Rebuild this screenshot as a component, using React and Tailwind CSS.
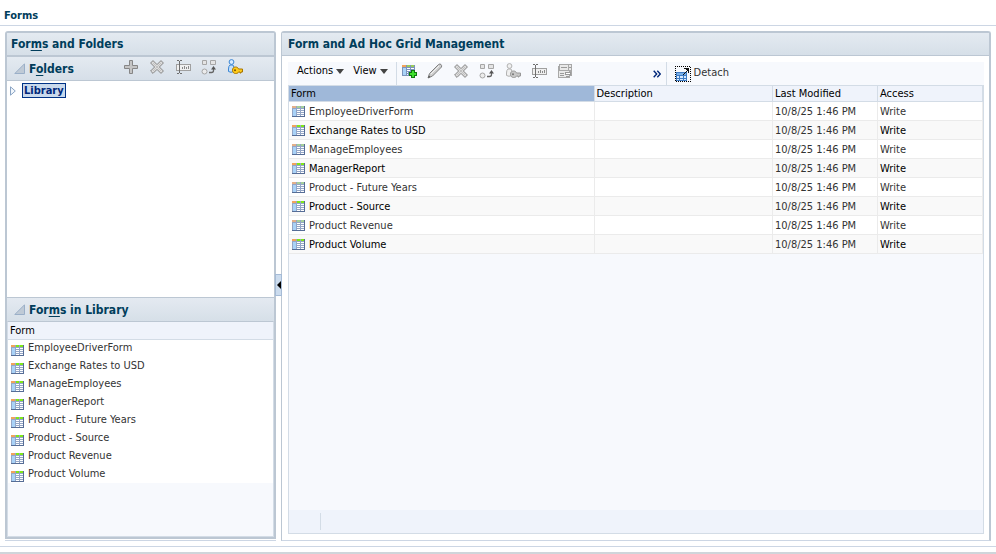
import { useState } from 'react';

const forms = [
  { name: 'EmployeeDriverForm', modified: '10/8/25 1:46 PM', access: 'Write' },
  { name: 'Exchange Rates to USD', modified: '10/8/25 1:46 PM', access: 'Write' },
  { name: 'ManageEmployees', modified: '10/8/25 1:46 PM', access: 'Write' },
  { name: 'ManagerReport', modified: '10/8/25 1:46 PM', access: 'Write' },
  { name: 'Product - Future Years', modified: '10/8/25 1:46 PM', access: 'Write' },
  { name: 'Product - Source', modified: '10/8/25 1:46 PM', access: 'Write' },
  { name: 'Product Revenue', modified: '10/8/25 1:46 PM', access: 'Write' },
  { name: 'Product Volume', modified: '10/8/25 1:46 PM', access: 'Write' },
];

function Svg({ children, crisp }) {
  return (
    <svg
      width="16"
      height="16"
      viewBox="0 0 16 16"
      fill="none"
      shapeRendering={crisp ? 'crispEdges' : 'auto'}
      className="shrink-0"
      aria-hidden="true"
    >
      {children}
    </svg>
  );
}

function FormIcon({ muted }) {
  const green = muted ? '#a5cf9a' : '#7fe817';
  return (
    <svg width="13" height="11" viewBox="0 0 13 11" shapeRendering="crispEdges" className="block shrink-0" aria-hidden="true">
      <path fill="#94a6c6" d="M0 0h13v11H0z" />
      <path fill="#566d96" d="M0 10h13v1H0zM12 0h1v11h-1z" />
      <path fill={muted ? '#e3b08a' : '#f2a45c'} d="M0 0h4v2H0z" />
      <path fill={green} d="M5 0h3v2H5zM9 0h3v2H9z" />
      <path fill="#a9d2f7" d="M1 3h3v7H1z" />
      <path fill="#fff" d="M5 3h3v1H5zM9 3h3v1H9zM5 5h3v1H5zM9 5h3v1H9zM5 7h3v1H5zM9 7h3v1H9zM5 9h3v1H5zM9 9h3v1H9z" />
    </svg>
  );
}

function AddIcon() {
  return (
    <Svg>
      <path d="M6.5 1.5h3v5h5v3h-5v5h-3v-5h-5v-3h5z" fill="#c4c4c4" stroke="#868686" />
    </Svg>
  );
}

function DeleteIcon() {
  return (
    <Svg>
      <path
        d="M4 1.6 8 5.6l4-4L14.4 4l-4 4 4 4-2.4 2.4-4-4-4 4L1.6 12l4-4-4-4z"
        fill="#dcdcdc"
        stroke="#858585"
      />
      <path d="m4 4 8 8m0-8-8 8" stroke="#c2c2c2" />
    </Svg>
  );
}

function RenameIcon() {
  return (
    <Svg crisp>
      <path fill="#a0a0a0" d="M1 5h15v7H1z" />
      <path fill="#f0f0f0" d="M2 6h13v5H2z" />
      <path fill="#6e6e6e" d="M2 1h2v1H2zM5 1h2v1H5zM4 2h1v12H4zM2 14h2v1H2zM5 14h2v1H5z" />
      <path fill="#8a8a8a" d="M7 8h1v2H7zM9 7h1v3H9zM11 8h1v2h-1zM13 7h1v3h-1z" />
    </Svg>
  );
}

function MoveIcon() {
  return (
    <Svg>
      <path fill="#e4e4e4" stroke="#a6a6a6" d="M1.5 1.5h4v4h-4zM9.5 1.5h5v4h-5z" />
      <circle cx="3.5" cy="12.500" r="2.500" fill="#ececec" stroke="#a6a6a6" />
      <path d="M8 13.500h2.500q2 0 2-2V9" stroke="#666" strokeWidth="1.300" />
      <path d="M10 10.500 12.500 7l2.500 3.500z" fill="#555" />
    </Svg>
  );
}

function AssignIcon({ muted }) {
  const line = muted ? '#b2b2b2' : '#3a86d4';
  return (
    <Svg>
      <circle cx="4.500" cy="3" r="2.400" fill={muted ? '#f0f0f0' : '#d8ebff'} stroke={line} />
      <path
        d="M3 6q-1.500 1-1.500 4v2.500q2.500 1.600 5 0L7 8.500 6 6z"
        fill={muted ? '#f0f0f0' : '#c5e0fb'}
        stroke={line}
      />
      <path
        d="M8.500 8c2 0 2.700 1 3 2h4v3H14v1h-1v-1h-1.500c-.4 1-1.200 1.500-3 1.500-1.700 0-3-1.200-3-3.300S6.800 8 8.500 8z"
        fill={muted ? '#c8c8c8' : '#ffcc1a'}
        stroke={muted ? '#989898' : '#a87500'}
      />
      <circle cx="8" cy="11.200" r="1" fill={muted ? '#777' : '#7a5200'} />
    </Svg>
  );
}

function CreateFormIcon() {
  return (
    <Svg crisp>
      <path fill="#7b93bb" d="M1 2h13v11H1z" />
      <path fill="#f2a45c" d="M1 2h4v2H1z" />
      <path fill="#9ccc5a" d="M6 2h3v2H6zM10 2h3v2h-3z" />
      <path fill="#a9d2f7" d="M2 5h3v7H2z" />
      <path fill="#fff" d="M6 5h3v1H6zM10 5h3v1h-3zM6 7h3v1H6zM6 9h1v1H6zM6 11h1v1H6z" />
      <path fill="#0f7a0f" d="M10 7h4v2h2v4h-2v2h-4v-2H8V9h2z" />
      <path fill="#3fe02e" d="M11 8h2v2h2v2h-2v2h-2v-2H9v-2h2z" />
    </Svg>
  );
}

function EditIcon() {
  return (
    <Svg>
      <path d="M1 15 2.500 10.500 11.500 1.500q1.500-1 2.500 0t.5 2.500l-9 9z" fill="#cfcfcf" stroke="#808080" />
      <path d="m4 11 8-8" stroke="#f2f2f2" />
      <path d="m1 15 1-2.500L3.500 14z" fill="#555" />
    </Svg>
  );
}

function LayoutIcon() {
  return (
    <Svg crisp>
      <path fill="#a8a8a8" d="M2 1h13v12H2zM1 3h12v12H1z" />
      <path fill="#e9e9e9" d="M3 2h8v5H3zM12 2h2v5h-2zM2 8h10v6H2z" />
      <path fill="#9a9a9a" d="M4 4h6v1H4zM12 4h2v1h-2zM3 10h4v1H3zM3 12h4v1H3zM8 9h6v3H8zM9 13h3v1H9z" />
      <path fill="#fff" d="M9 10h4v1H9z" />
    </Svg>
  );
}

function DetachIcon() {
  return (
    <Svg crisp>
      <path
        fill="#000"
        d="M0 0h1v1H0zM2 0h1v1H2zM4 0h1v1H4zM6 0h1v1H6zM8 0h1v1H8zM10 0h1v1h-1zM12 0h1v1h-1zM14 0h1v1h-1zM1 15h1v1H1zM3 15h1v1H3zM5 15h1v1H5zM7 15h1v1H7zM9 15h1v1H9zM11 15h1v1h-1zM13 15h1v1h-1zM15 15h1v1h-1zM0 2h1v1H0zM0 4h1v1H0zM0 6h1v1H0zM0 8h1v1H0zM0 10h1v1H0zM0 12h1v1H0zM0 14h1v1H0zM15 1h1v1h-1zM15 3h1v1h-1zM15 5h1v1h-1zM15 7h1v1h-1zM15 9h1v1h-1zM15 11h1v1h-1zM15 13h1v1h-1z"
      />
      <path fill="#3f7cc4" d="M1 6h11v9H1z" />
      <path fill="#79b0ea" d="M2 7h9v2H2z" />
      <path fill="#d7eaff" d="M2 10h2v2H2zM5 10h3v2H5zM9 10h2v2H9zM2 13h2v1H2zM5 13h3v1H5zM9 13h2v1H9z" />
      <path fill="#f7f9fd" d="M6 1h7v3h-3v2H6z" />
      <path fill="#111" d="M9 2h5v5h-1V5h-1v1h-1v1h-1v1H9v1H8V8h1V7h1V6h1V5h1V4h-1V3H9z" />
    </Svg>
  );
}

function Disclosure() {
  return (
    <svg width="11" height="11" viewBox="0 0 11 11" className="shrink-0" aria-hidden="true">
      <path d="M10.500 .8v9.700H.8z" fill="#bfcad6" stroke="#9aafc8" />
    </svg>
  );
}

function DownArrow() {
  return (
    <svg width="8" height="5" viewBox="0 0 8 5" aria-hidden="true">
      <path d="M0 0h8L4 5z" fill="#444" />
    </svg>
  );
}

function ToolButton({ label, children }) {
  return (
    <button type="button" title={label} aria-label={label} className="block h-4 w-4">
      {children}
    </button>
  );
}

function SectionHeader({ title, children }) {
  return (
    <div className="flex h-[23px] shrink-0 items-center bg-linear-to-b from-[#e4eaf1] to-[#d6dfe8] pl-[7px]">
      <Disclosure />
      <h3 className="ml-1 pt-px text-xs font-bold text-[#003d5b]">{title}</h3>
      {children}
    </div>
  );
}

function FoldersPanel() {
  return (
    <section className="flex w-[271px] shrink-0 flex-col rounded-t-[3px] border-b border-[#ccd6e4] pb-px">
      <div className="flex flex-1 flex-col rounded-t-[3px] border-2 border-[#bcc7d3]">
        <h2 className="h-[22px] shrink-0 bg-linear-to-b from-[#e4eaf1] to-[#d6dfe8] pt-px pl-1 text-xs leading-[21px] font-bold text-[#003d5b]">
          For<u className="underline-offset-2">m</u>s and Folders
        </h2>

        {/* Folder tree */}
        <div className="flex h-[242px] shrink-0 flex-col border-t-2 border-[#bcc7d3]">
          <SectionHeader title={<>F<u className="underline-offset-2">o</u>lders</>}>
            <div className="mr-[31px] mb-[3px] ml-auto flex gap-[10px]">
              <ToolButton label="Create"><AddIcon /></ToolButton>
              <ToolButton label="Delete"><DeleteIcon /></ToolButton>
              <ToolButton label="Rename"><RenameIcon /></ToolButton>
              <ToolButton label="Move"><MoveIcon /></ToolButton>
              <ToolButton label="Assign Access"><AssignIcon /></ToolButton>
            </div>
          </SectionHeader>
          <div className="flex-1 border-t border-[#bcc7d3] bg-white pt-[2px] pl-[3px]">
            <div className="flex items-center gap-[6px]">
              <button type="button" aria-label="Expand Library">
                <svg width="6" height="10" viewBox="0 0 6 10" className="block" aria-hidden="true">
                  <path d="M.5 .8v8.400L5.300 5z" fill="#f2f7fc" stroke="#8aa4c4" />
                </svg>
              </button>
              <button type="button" className="h-[15px] border border-[#003286] bg-[#c9d9ec] px-px leading-[13px] font-bold text-[#00277a]">
                Library
              </button>
            </div>
          </div>
        </div>

        {/* Forms of the selected folder */}
        <div className="flex flex-1 flex-col border-t border-[#bcc7d3]">
          <SectionHeader title={<>For<u className="underline-offset-2">m</u>s in Library</>} />
          <div className="flex-1 border border-[#d3dce6] border-t-[#bcc7d3] bg-[#f7f9fd]">
            <table className="w-full border-collapse text-left">
              <thead>
                <tr className="h-[17px] border-b border-[#d3dce6] bg-[#eff3fb]">
                  <th className="p-0 pt-px pl-[2px] leading-[15px] font-normal text-black">Form</th>
                </tr>
              </thead>
              <tbody>
                {forms.map((form) => (
                  <tr key={form.name} className="h-[18px] bg-white">
                    <td className="p-0 pl-[3px] text-[#333]">
                      <div className="flex items-end gap-1">
                        <FormIcon />
                        <span className="leading-4">{form.name}</span>
                      </div>
                    </td>
                  </tr>
                ))}
              </tbody>
            </table>
          </div>
        </div>
      </div>
    </section>
  );
}

function Toolbar() {
  return (
    <div className="flex h-[23px] shrink-0 bg-[#f7f9fd]">
      <div className="flex items-center gap-[9px] pr-2 pb-[5px] pl-[9px] text-black">
        <button type="button" className="flex items-center gap-[3px]">
          Actions <DownArrow />
        </button>
        <button type="button" className="flex items-center gap-[3px]">
          View <DownArrow />
        </button>
      </div>
      <div className="flex items-center gap-[10px] border-l border-[#d3dce6] pb-[6px] pl-1">
        <ToolButton label="Create"><CreateFormIcon /></ToolButton>
        <ToolButton label="Edit"><EditIcon /></ToolButton>
        <ToolButton label="Delete"><DeleteIcon /></ToolButton>
        <ToolButton label="Move"><MoveIcon /></ToolButton>
        <ToolButton label="Assign Access"><AssignIcon muted /></ToolButton>
        <ToolButton label="Rename"><RenameIcon /></ToolButton>
        <ToolButton label="Layout"><LayoutIcon /></ToolButton>
      </div>
      <button type="button" aria-label="More" className="ml-[75px] px-[5px]">
        <svg width="8" height="8" viewBox="0 0 8 8" fill="none" aria-hidden="true">
          <path d="m.7 .7 3 3.300-3 3.300m3.600-6.600 3 3.300-3 3.300" stroke="#00277a" strokeWidth="1.400" />
        </svg>
      </button>
      <button type="button" className="flex items-center gap-[3px] border-l border-[#d3dce6] pl-2 text-[#333]">
        <DetachIcon />
        Detach
      </button>
    </div>
  );
}

function FormsTable() {
  return (
    <table className="w-full table-fixed border-collapse text-left">
      <colgroup>
        <col className="w-[305px]" />
        <col />
        <col className="w-[105px]" />
        <col className="w-[105px]" />
      </colgroup>
      <thead>
        <tr className="h-4 border-y border-[#d3dce6] bg-[#eff3fb] text-black">
          <th className="border-r border-[#d3dce6] bg-[#9fb8d9] p-0 pt-px pl-[2px] leading-[14px] font-normal">Form</th>
          <th className="border-r border-[#d3dce6] p-0 pt-px pl-[2px] leading-[14px] font-normal">Description</th>
          <th className="border-r border-[#d3dce6] p-0 pt-px pl-[2px] leading-[14px] font-normal">Last Modified</th>
          <th className="border-r border-[#d3dce6] p-0 pt-px pl-[2px] leading-[14px] font-normal">Access</th>
        </tr>
      </thead>
      <tbody>
        {forms.map((form, index) => {
          const odd = index % 2 === 1;
          return (
            <tr key={form.name} className={odd ? 'h-[19px] bg-[#f9f9f9] text-black' : 'h-[19px] bg-white text-[#333]'}>
              <td className="border-r border-b border-[#ebebeb] p-0 pt-px pl-[3px]">
                <div className="flex items-center gap-1">
                  <FormIcon muted={!odd} />
                  <span className="leading-4">{form.name}</span>
                </div>
              </td>
              <td className="border-r border-b border-[#ebebeb] p-0" />
              <td className="border-r border-b border-[#ebebeb] p-0 pt-px pl-[2px] leading-4 text-[#333]">{form.modified}</td>
              <td className="border-r border-b border-[#ebebeb] p-0 pt-px pl-[2px] leading-4">{form.access}</td>
            </tr>
          );
        })}
      </tbody>
    </table>
  );
}

function ManagementPanel() {
  return (
    <section className="flex min-w-0 flex-1 flex-col rounded-t-[3px] border border-t-2 border-r-2 border-[#bcc7d3] border-b-[#ccd6e4]">
      <h2 className="h-[23px] shrink-0 border-b border-[#bcc7d3] bg-linear-to-b from-[#e4eaf1] to-[#d6dfe8] pt-px pl-[6px] text-xs leading-[21px] font-bold text-[#003d5b]">
        Form and Ad Hoc Grid Management
      </h2>
      <div className="flex flex-1 flex-col py-[6px] pr-[5px] pl-[6px]">
        <Toolbar />
        <div className="flex flex-1 flex-col border border-t-0 border-[#d3dce6] bg-[#f7f9fd]">
          <FormsTable />
          <div className="mt-auto flex h-[23px] bg-[#eff3fb] py-[3px] pl-[31px]">
            <div className="border-l border-[#d3dce6]" />
          </div>
        </div>
      </div>
    </section>
  );
}

export default function App() {
  const [collapsed, setCollapsed] = useState(false);

  return (
    <div className="flex min-h-screen flex-col bg-white font-['DejaVu_Sans_Condensed','DejaVu_Sans',sans-serif] text-[11px]">
      <h1 className="h-[26px] shrink-0 border-b border-[#ccd6e4] pt-[9px] pl-1 leading-[14px] font-bold text-[#003d5b]">
        Forms
      </h1>

      <main className="flex flex-1 p-[5px]">
        {!collapsed && <FoldersPanel />}

        {/* Splitter */}
        <div className="relative w-[5px] shrink-0">
          <button
            type="button"
            aria-label="Toggle folders"
            onClick={() => setCollapsed(!collapsed)}
            className="absolute top-[243px] -left-px flex h-[22px] w-[7px] items-center justify-center border border-[#a5bbd6] bg-[#ccdcee]"
          >
            <svg width="4" height="8" viewBox="0 0 4 8" className="shrink-0" aria-hidden="true">
              <path d="M4 0v8L0 4z" fill="#000" />
            </svg>
          </button>
        </div>

        <ManagementPanel />
      </main>

      <footer className="h-2 shrink-0 border-t border-b-2 border-[#ccd6e4] border-b-[#cfd5da]" />
    </div>
  );
}
